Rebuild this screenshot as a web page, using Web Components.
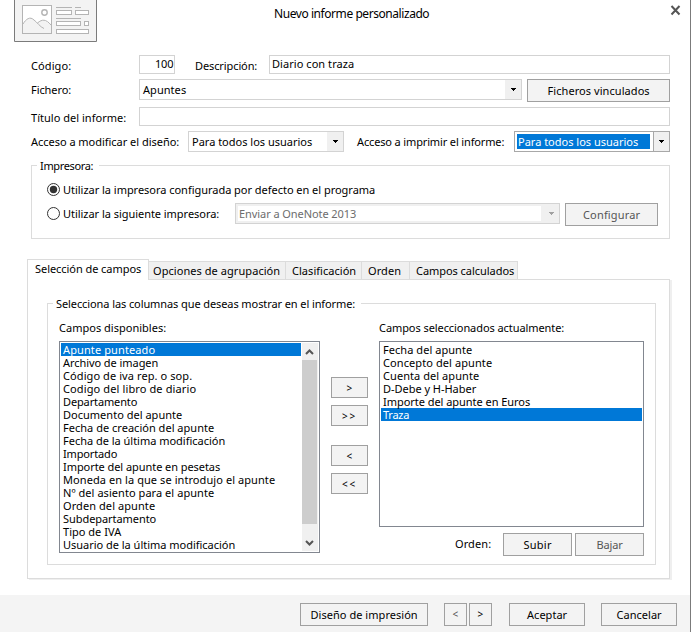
<!DOCTYPE html>
<html lang="es">
<head>
<meta charset="utf-8">
<title>Nuevo informe personalizado</title>
<style>
html,body{margin:0;padding:0;overflow:hidden}
body{width:691px;height:632px;background:#fff;color:#000;font:11px/15px "Noto Sans","Open Sans",sans-serif}
</style>
</head>
<body>
<report-dialog></report-dialog>
<script>
const FONT = '"Noto Sans","Open Sans",sans-serif';
const ctx = document.createElement('canvas').getContext('2d');

function define(name, html, setup) {
  const tpl = document.createElement('template');
  tpl.innerHTML = html;
  customElements.define(name, class extends HTMLElement {
    connectedCallback() {
      if (this.shadowRoot) return;
      const w = this.getAttribute('w');
      if (w && name !== 'ui-text') this.style.width = w + 'px';
      this.attachShadow({mode: 'open'}).append(tpl.content.cloneNode(true));
      if (setup) setup(this);
    }
  });
}

/* Text run whose tracking is adjusted to span the width in "w". */
define('ui-text', `<style>
:host{display:block;flex:none;white-space:nowrap;line-height:15px;overflow:visible}
</style><slot></slot>`, el => {
  const w = +el.getAttribute('w');
  if (!w) return;
  const size = el.getAttribute('size') || 11;
  ctx.font = size + 'px ' + FONT;
  const s = el.textContent;
  el.style.fontSize = size + 'px';
  el.style.width = w + 'px';
  el.style.letterSpacing = ((w + .2 - ctx.measureText(s).width) / s.length).toFixed(3) + 'px';
});

define('ui-button', `<style>
:host{display:flex;flex:none;justify-content:center;box-sizing:border-box;height:23px;padding-top:3px;border:1px solid #a0a0a0;background:#f3f3f3}
:host([small]){height:21px}
:host([disabled]){color:#555}
</style><slot></slot>`);

define('ui-input', `<style>
:host{display:flex;flex:none;box-sizing:border-box;height:19px;border:1px solid #d3d3d3;background:#fff}
:host([end]){justify-content:flex-end;padding-right:1px}
</style><slot></slot>`);

define('ui-select', `<style>
:host{display:flex;flex:none;box-sizing:border-box;height:21px;border:1px solid #d3d3d3;background:#fff}
.v{flex:1;padding:2px 0 0 3px}
.b{width:16px;background:#f0f0f0;display:flex;align-items:center;justify-content:center}
svg{display:block;margin-left:2px}
:host([focus]) svg{margin-left:1px}
:host([focus]){border-color:#a8a8a8}
:host([focus]) .v{background:#0078d7;color:#fff;margin:2px 3px 2px 2px;padding:0 0 0 1px}
:host([focus]) .b{width:15px;border-left:1px solid #a8a8a8}
:host([disabled]){background:#f0f0f0;color:#6d6d6d}
:host([disabled]) .v{background:#fff;margin:2px;padding:0 0 0 1px}
:host([disabled]) path{fill:#a0a0a0}
</style><div class="v"><slot></slot></div><div class="b"><svg width="6" height="3" viewBox="0 0 6 3" shape-rendering="crispEdges"><path d="M0 0H5V1H4V2H3V3H2V2H1V1H0Z"/></svg></div>`);

define('ui-radio', `<style>
:host{display:flex;flex:none;gap:3px;height:15px}
svg{display:block;margin-top:1px}
circle+circle{display:none}
:host([checked]) circle+circle{display:block}
</style><svg width="13" height="13" viewBox="0 0 13 13"><circle cx="6.5" cy="6.5" r="6" fill="#fff" stroke="#333"/><circle cx="6.5" cy="6.5" r="3.7" fill="#333"/></svg><slot></slot>`);

define('ui-group', `<style>
:host{display:block;box-sizing:border-box;border:1px solid #dcdcdc}
.l{width:fit-content;height:15px;margin:-8px 0 0 5px;padding:0 6px 0 3px;background:#fff}
</style><div class="l"><slot name="legend"></slot></div><slot></slot>`);

define('ui-tab', `<style>
:host{display:block;flex:none;box-sizing:border-box;height:18px;margin-top:2px;background:#f0f0f0;border:1px solid #dcdcdc;border-width:1px 1px 0 0;padding:1px 0 0 4px}
:host([selected]){height:21px;margin:0 0 -1px;background:#fff;border-left-width:1px;padding:1px 0 0 7px;position:relative}
</style><slot></slot>`);

define('ui-list', `<style>
:host{display:flex;flex:none;box-sizing:border-box;border:1px solid #828790;background:#fff;padding:1px}
.i{flex:1;min-width:0}
</style><div class="i"><slot></slot></div><slot name="bar"></slot>`);

define('ui-item', `<style>
:host{display:block;height:13px;padding-left:2px}
:host([selected]){background:#0078d7;color:#fff}
::slotted(ui-text){line-height:13px}
</style><slot></slot>`);

define('ui-scrollbar', `<style>
:host{display:flex;flex-direction:column;box-sizing:border-box;width:16px;margin:0 0 0 1px;background:#f0f0f0}
.t{flex:1;background:#cdcdcd;margin-right:1px}
svg{display:block;flex:none}path{fill:none;stroke:#555;stroke-width:2}
</style><svg width="16" height="17"><path d="M4 11L7.5 7.5L11 11"/></svg><div class="t"></div><svg width="16" height="27"><path d="M4 17L7.5 20.5L11 17"/></svg>`);

define('report-icon', `<style>
:host{display:block;flex:none;width:83px;height:42px}svg{display:block}
</style><svg width="83" height="42" viewBox="0 0 83 42">
<path d="M.5 -1V41.5H82.5V-1" fill="#f3f3f3" stroke="#7b7b7b"/>
<g fill="#fff" stroke="#b4b4b4">
<rect x="8.500" y="5.500" width="29" height="28"/>
<path d="M9 24C12 19 16 16 20 20C23 22 26 26 30 29L23 23C28 19 32 21 37 25V33H9Z" fill="#f3f3f3" stroke="none"/>
<path d="M9 24C12 19 16 16 20 20C23 22 26 27 30 28.500M23.500 23C28 19 32 19 37 25" fill="none"/>
<circle cx="30.500" cy="12.500" r="2.700" stroke-width="1.400"/>
<path d="M42 7.500H58M61 7.500H67M42 18.500H67" fill="none"/>
<rect x="42.500" y="10.500" width="15" height="4"/><rect x="61.500" y="10.500" width="13" height="4"/>
<rect x="42.500" y="21.500" width="24" height="4"/><rect x="70.500" y="21.500" width="4" height="4"/>
<rect x="42.500" y="29.500" width="32" height="4"/></g></svg>`);

const items = (rows, sel) => rows.map(([t, w], i) =>
  `<ui-item${i === sel ? ' selected' : ''}><ui-text w="${w}">${t}</ui-text></ui-item>`).join('');

const available = [['Apunte punteado',92],['Archivo de imagen',95],['Código de iva rep. o sop.',129],
  ['Codigo del libro de diario',133],['Departamento',74],['Documento del apunte',119],
  ['Fecha de creación del apunte',151],['Fecha de la última modificación',162],['Importado',54],
  ['Importe del apunte en pesetas',157],['Moneda en la que se introdujo el apunte',212],
  ['Nº del asiento para el apunte',151],['Orden del apunte',92],['Subdepartamento',93],
  ['Tipo de IVA',58],['Usuario de la última modificación',172]];
const chosen = [['Fecha del apunte',89],['Concepto del apunte',109],['Cuenta del apunte',96],
  ['D-Debe y H-Haber',93],['Importe del apunte en Euros',147],['Traza',26]];

define('report-dialog', `<style>
:host{display:flex;flex-direction:column;box-sizing:border-box;width:691px;height:632px;border-right:1px solid #7b7b7b;background:#fff}
.r,header,footer,.tabs,.cols{display:flex;align-items:flex-start}
header{height:55px;padding-left:14px;box-sizing:border-box;flex:none}
header ui-text{margin:6px 0 0 177px}
header svg{margin:5px 0 0 241px}
.r{padding-left:31px;flex:none}
.r>ui-text{margin-top:3px}
.printer{margin:13px 0 0 31px;width:639px;height:74px;flex:none}
.printer .p1{margin:9px 0 0 15px}
.printer .r2{display:flex;margin:6px 0 0 15px;align-items:flex-start}
.r2 ui-radio{margin-top:3px;width:188px}
.tabs{margin:20px 0 0 27px;flex:none}
.panel{box-sizing:border-box;margin-left:27px;width:643px;height:300px;border:1px solid #dcdcdc;padding:23px 0 0 19px;flex:none;box-shadow:2px 1px 0 #efefef}
.fields{width:609px;height:262px}
.cols{padding:9px 0 0 11px}
.cols>div>ui-text{margin-bottom:6px}
.mv{display:flex;flex-direction:column;padding:57px 11px 0 11px;gap:7px}
.mv ui-button:nth-child(3){margin-top:12px}
.ord{display:flex;justify-content:flex-end;margin-top:6px}
.ord>ui-text{margin-top:3px}
footer{margin-top:auto;height:37px;box-sizing:border-box;background:#f4f4f4;padding:8px 0 0 300px;flex:none}
</style>
<header><report-icon></report-icon><ui-text size="12" w="155">Nuevo informe personalizado</ui-text>
<svg width="12" height="11" viewBox="0 0 12 11"><path d="M1.500 1L9.500 9.500M9.500 1L1.500 9.500" stroke="#555" stroke-width="2"/></svg></header>
<div class="r" style="height:24px"><ui-text w="40" style="margin-right:68px">Código:</ui-text><ui-input end w="36"><ui-text w="18">100</ui-text></ui-input><ui-text w="62" style="margin:3px 12px 0 20px">Descripción:</ui-text><ui-input w="401"><ui-text w="82" style="margin-left:2px">Diario con traza</ui-text></ui-input></div>
<div class="r" style="height:28px"><ui-text w="40" style="margin-right:68px">Fichero:</ui-text><ui-select w="383"><ui-text w="43">Apuntes</ui-text></ui-select><ui-button w="143" style="margin-left:5px"><ui-text w="102">Ficheros vinculados</ui-text></ui-button></div>
<div class="r" style="height:24px"><ui-text w="95" style="margin-right:13px">Título del informe:</ui-text><ui-input w="531"></ui-input></div>
<div class="r"><ui-text w="148" style="margin-right:9px">Acceso a modificar el diseño:</ui-text><ui-select w="156"><ui-text w="120">Para todos los usuarios</ui-text></ui-select><ui-text w="147" style="margin:3px 10px 0 13px">Acceso a imprimir el informe:</ui-text><ui-select focus w="156"><ui-text w="120">Para todos los usuarios</ui-text></ui-select></div>
<ui-group class="printer"><ui-text slot="legend" w="53">Impresora:</ui-text>
<ui-radio class="p1" checked><ui-text w="312">Utilizar la impresora configurada por defecto en el programa</ui-text></ui-radio>
<div class="r2"><ui-radio><ui-text w="156">Utilizar la siguiente impresora:</ui-text></ui-radio><ui-select disabled w="325"><ui-text w="117">Enviar a OneNote 2013</ui-text></ui-select><ui-button disabled w="93" style="margin-left:5px"><ui-text w="57">Configurar</ui-text></ui-button></div></ui-group>
<div class="tabs"><ui-tab selected w="122"><ui-text w="106">Selección de campos</ui-text></ui-tab><ui-tab w="137"><ui-text w="127">Opciones de agrupación</ui-text></ui-tab><ui-tab w="76"><ui-text w="64" style="margin-left:2px">Clasificación</ui-text></ui-tab><ui-tab w="48"><ui-text w="33" style="margin-left:2px">Orden</ui-text></ui-tab><ui-tab w="108"><ui-text w="98" style="margin-left:2px">Campos calculados</ui-text></ui-tab></div>
<div class="panel"><ui-group class="fields"><ui-text slot="legend" w="299">Selecciona las columnas que deseas mostrar en el informe:</ui-text>
<div class="cols"><div><ui-text w="107">Campos disponibles:</ui-text><ui-list w="261" style="height:212px">${items(available, 0)}<ui-scrollbar slot="bar"></ui-scrollbar></ui-list></div>
<div class="mv"><ui-button small w="37"><ui-text size="10" w="6">&gt;</ui-text></ui-button><ui-button small w="37"><ui-text size="10" w="15">&gt;&gt;</ui-text></ui-button><ui-button small w="37"><ui-text size="10" w="6">&lt;</ui-text></ui-button><ui-button small w="37"><ui-text size="10" w="15">&lt;&lt;</ui-text></ui-button></div>
<div><ui-text w="185">Campos seleccionados actualmente:</ui-text><ui-list w="265" style="height:186px">${items(chosen, 5)}</ui-list>
<div class="ord"><ui-text w="36">Orden:</ui-text><ui-button w="69" style="margin:0 3px 0 12px"><ui-text w="28">Subir</ui-text></ui-button><ui-button disabled w="69"><ui-text w="26">Bajar</ui-text></ui-button></div></div></div></ui-group></div>
<footer><ui-button w="128"><ui-text w="107">Diseño de impresión</ui-text></ui-button><ui-button w="23" disabled style="margin-left:16px"><ui-text size="10" w="6">&lt;</ui-text></ui-button><ui-button w="23" style="margin-left:2px"><ui-text size="10" w="6">&gt;</ui-text></ui-button><ui-button w="76" style="margin-left:17px"><ui-text w="40">Aceptar</ui-text></ui-button><ui-button w="76" style="margin-left:16px"><ui-text w="45">Cancelar</ui-text></ui-button></footer>`);
</script>
</body>
</html>
